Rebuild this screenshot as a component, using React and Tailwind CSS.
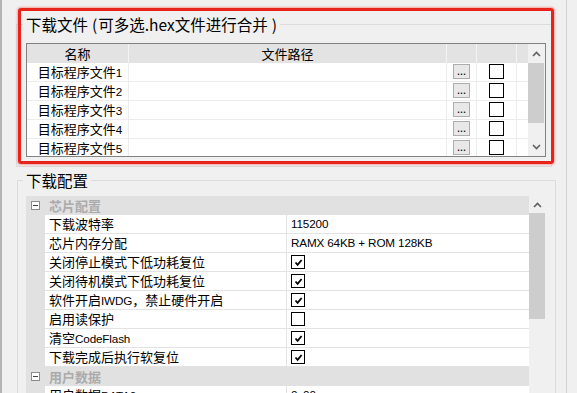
import React from 'react';

const FILES = [1, 2, 3, 4, 5].map((n) => `目标程序文件${n}`);

const PROPS = [
  { type: 'cat', label: '芯片配置' },
  { name: '下载波特率', value: '115200' },
  { name: '芯片内存分配', value: 'RAMX 64KB + ROM 128KB' },
  { name: '关闭停止模式下低功耗复位', check: true },
  { name: '关闭待机模式下低功耗复位', check: true },
  { name: '软件开启IWDG，禁止硬件开启', check: true },
  { name: '启用读保护', check: false },
  { name: '清空CodeFlash', check: true },
  { name: '下载完成后执行软复位', check: true },
  { type: 'cat', label: '用户数据' },
  { name: '用户数据DATA0', value: '0x00' },
];

// Latin runs are set in a narrower face so mixed strings keep the reference widths
function Txt({ s }) {
  const parts = s.split(/([\x20-\x7e]+)/).filter(Boolean);
  return parts.map((p, i) =>
    /^[\x20-\x7e]+$/.test(p) ? (
      <span key={i} className="font-['Liberation_Sans',sans-serif] text-[11.7px] tracking-[-0.15px]">
        {p}
      </span>
    ) : (
      <span key={i}>{p}</span>
    )
  );
}

function Chevron({ down }) {
  return (
    <svg width="9" height="6" viewBox="0 0 9 6">
      <path
        d={down ? 'M1 1 L4.5 4.5 L8 1' : 'M1 5 L4.5 1.5 L8 5'}
        fill="none"
        stroke="#606060"
        strokeWidth="1.6"
      />
    </svg>
  );
}

function CheckBox({ checked, size = 'w-[14px] h-[14px]' }) {
  return (
    <div className={`${size} border border-black bg-white flex items-center justify-center`}>
      {checked && (
        <svg width="9" height="9" viewBox="0 0 9 9">
          <path d="M1.5 4.5 L3.6 6.8 L7.6 2" fill="none" stroke="#000" strokeWidth="1.8" />
        </svg>
      )}
    </div>
  );
}

function MinusBox() {
  return (
    <div className="w-[9px] h-[9px] border border-[#8c8c8c] bg-white flex items-center justify-center">
      <div className="w-[5px] h-px bg-[#444]" />
    </div>
  );
}

function FileTable() {
  return (
    <div className="mt-[9px] w-[520px] h-[114px] border border-[#828282] flex overflow-hidden bg-white">
      <div className="w-[501px] flex flex-col">
        <div className="h-[19px] flex bg-[#e3e3e3] shrink-0">
          <div className="w-[102px] border-r border-[#f4f4f4] text-center leading-[19px]">名称</div>
          <div className="w-[318px] border-r border-[#f4f4f4] text-center leading-[19px]">文件路径</div>
          <div className="w-[30px] border-r border-[#f4f4f4]" />
          <div className="w-[40px] border-r border-[#f4f4f4]" />
          <div className="flex-1" />
        </div>
        {FILES.map((f) => (
          <div key={f} className="h-[19px] flex shrink-0 border-b border-[#ececec]">
            <div className="w-[102px] border-r border-[#ececec] text-right pr-[6px] leading-[18px]">
              <Txt s={f} />
            </div>
            <div className="w-[318px] border-r border-[#ececec]" />
            <div className="w-[30px] border-r border-[#ececec] flex items-start justify-center pt-[1px]">
              <div className="w-[17px] h-[15px] border border-[#adadad] bg-[#e8e8e8] text-[11px] leading-[11px] text-center">...</div>
            </div>
            <div className="w-[40px] border-r border-[#ececec] flex items-start justify-center pt-[1px]">
              <CheckBox size="w-[15px] h-[15px]" />
            </div>
            <div className="flex-1" />
          </div>
        ))}
      </div>
      <div className="w-[17px] bg-[#f0f0f0] flex flex-col pr-px">
        <div className="h-[19px] flex items-center justify-center">
          <Chevron />
        </div>
        <div className="h-[60px] bg-[#cdcdcd]" />
        <div className="flex-1" />
        <div className="h-[18px] flex items-center justify-center">
          <Chevron down />
        </div>
      </div>
    </div>
  );
}

function PropertyGrid() {
  return (
    <div className="mt-[6px] w-[519px] flex">
      <div className="w-[503px] flex flex-col">
        {PROPS.map((p, i) =>
          p.type === 'cat' ? (
            <div key={i} className="h-[19px] flex bg-[#e1e1e1] shrink-0">
              <div className="w-[19px] flex items-center justify-center">
                <MinusBox />
              </div>
              <div className="pl-[4px] leading-[19px] font-bold text-[#ababab]">{p.label}</div>
            </div>
          ) : (
            <div key={i} className="h-[19px] flex shrink-0">
              <div className="w-[19px] bg-[#e1e1e1]" />
              <div className="w-[242px] bg-white border-r border-b border-[#e3e3e3] pl-[4px] leading-[18px]">
                <Txt s={p.name} />
              </div>
              <div className="flex-1 bg-white border-b border-[#e3e3e3] pl-[4px] leading-[18px] flex items-center">
                {p.value !== undefined ? <Txt s={p.value} /> : <CheckBox checked={p.check} />}
              </div>
            </div>
          )
        )}
      </div>
      <div className="w-[16px] flex flex-col">
        <div className="h-[17px] flex items-center justify-center">
          <Chevron />
        </div>
        <div className="h-[106px] bg-[#cdcdcd]" />
      </div>
    </div>
  );
}

export default function App() {
  return (
    <div className="w-[577px] h-[393px] overflow-hidden bg-[#f0f0f0] flex text-[13px] text-black font-['Noto_Sans_CJK_SC',sans-serif]">
      <div className="w-[2px] bg-[#b4b4b4] shrink-0" />
      <div className="w-[564px] shrink-0 pt-[14px] relative">
        <fieldset className="ml-[14px] w-[536px] border border-[#dcdcdc] pl-[9px] pb-[9px]">
          <legend className="-ml-[3px] px-[3px] text-[15.5px] leading-[20px]">
            下载文件<span className="ml-[4px] mr-[1px]">(</span>可多选.hex文件进行合并<span className="ml-[4px]">)</span>
          </legend>
          <FileTable />
        </fieldset>
        {/* red highlight drawn over the first group box */}
        <div className="absolute left-[16px] top-[8px] w-[536px] h-[156px] border-[3px] border-[#e8231b] rounded-[3px] shadow-[0_0_2px_1px_rgba(240,80,70,0.45)] pointer-events-none" />
        <fieldset className="mt-[3px] ml-[15px] w-[539px] border border-[#dcdcdc] pl-[8px]">
          <legend className="-ml-[3px] px-[3px] text-[15.5px] leading-[20px]">下载配置</legend>
          <PropertyGrid />
        </fieldset>
      </div>
      <div className="w-[1px] bg-[#d2d2d2] shrink-0" />
      <div className="flex-1" />
    </div>
  );
}
